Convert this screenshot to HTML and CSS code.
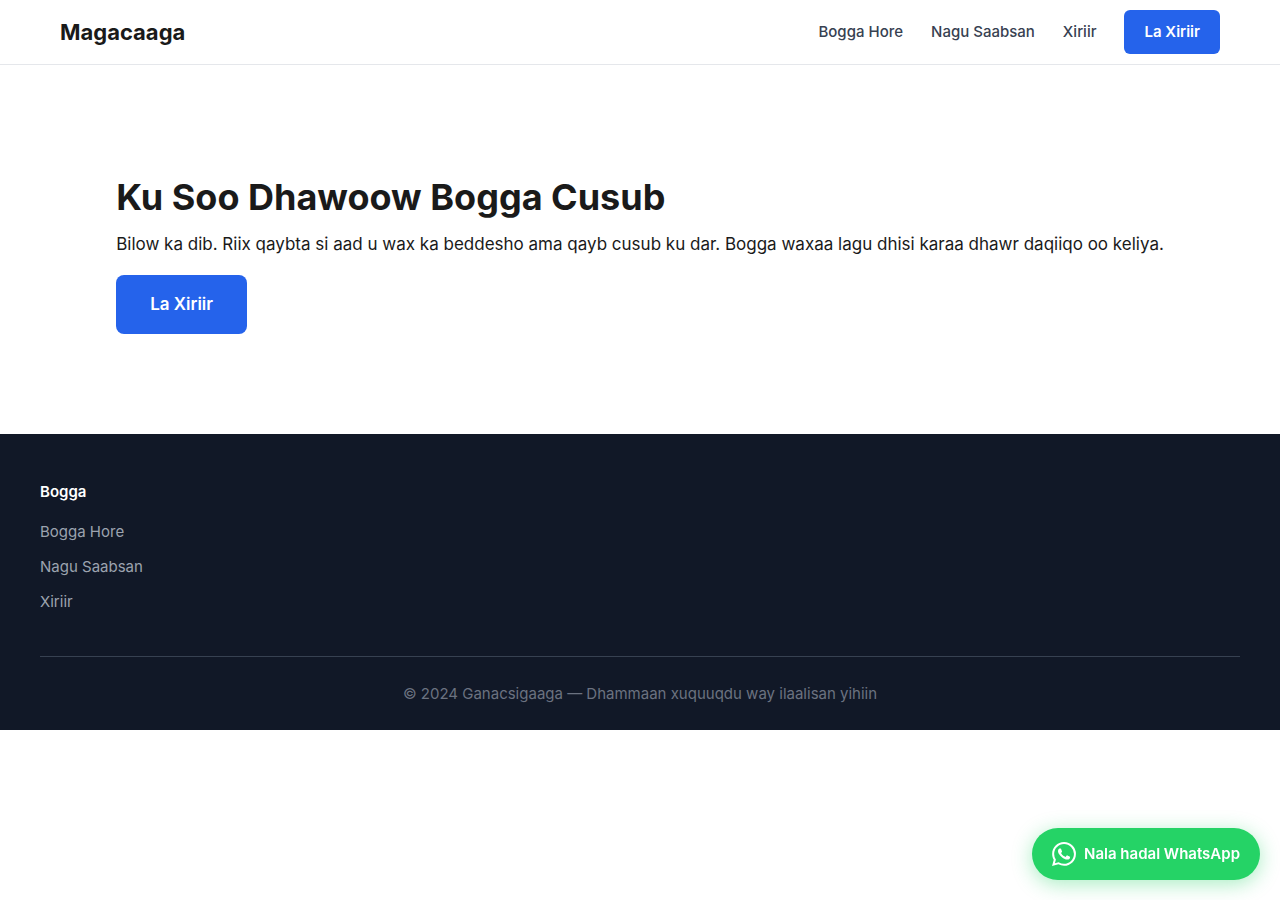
FILE: index.html
```
<!DOCTYPE html>
<html lang="so">
<head>
<meta charset="utf-8">
<meta name="viewport" content="width=device-width, initial-scale=1">
<title>Magacaaga</title>
<link rel="stylesheet" href="styles.css">
</head>
<body>
<header class="header">
  <div class="header-inner">
    <a class="logo" href="#">Magacaaga</a>
    <nav class="nav">
      <a class="nav-link" href="#">Bogga Hore</a>
      <a class="nav-link" href="#">Nagu Saabsan</a>
      <a class="nav-link" href="#">Xiriir</a>
      <a class="nav-cta" href="#">La Xiriir</a>
    </nav>
  </div>
</header>
<main class="hero">
  <div class="hero-content">
    <h1 class="hero-title">Ku Soo Dhawoow Bogga Cusub</h1>
    <p class="hero-text">Bilow ka dib. Riix qaybta si aad u wax ka beddesho ama qayb cusub ku dar. Bogga waxaa lagu dhisi karaa dhawr daqiiqo oo keliya.</p>
    <a class="hero-button" href="#">La Xiriir</a>
  </div>
</main>
<footer class="footer">
  <div class="footer-inner">
    <h2 class="footer-title">Bogga</h2>
    <ul class="footer-list">
      <li><a class="footer-link" href="#">Bogga Hore</a></li>
      <li><a class="footer-link" href="#">Nagu Saabsan</a></li>
      <li><a class="footer-link" href="#">Xiriir</a></li>
    </ul>
    <p class="copyright">© 2024 Ganacsigaaga — Dhammaan xuquuqdu way ilaalisan yihiin</p>
  </div>
</footer>
<a class="whatsapp" href="#">
  <svg class="whatsapp-icon" viewBox="0 0 24 24" fill="currentColor" aria-hidden="true"><path d="M17.472 14.382c-.297-.149-1.758-.867-2.03-.967-.273-.099-.471-.148-.67.15-.197.297-.767.966-.94 1.164-.173.199-.347.223-.644.075-.297-.15-1.255-.463-2.39-1.475-.883-.788-1.48-1.761-1.653-2.059-.173-.297-.018-.458.13-.606.134-.133.298-.347.446-.52.149-.174.198-.298.298-.497.099-.198.05-.371-.025-.52-.075-.149-.669-1.612-.916-2.207-.242-.579-.487-.5-.669-.51-.173-.008-.371-.01-.57-.01-.198 0-.52.074-.792.372-.272.297-1.04 1.016-1.04 2.479 0 1.462 1.065 2.875 1.213 3.074.149.198 2.096 3.2 5.077 4.487.709.306 1.262.489 1.694.625.712.227 1.36.195 1.871.118.571-.085 1.758-.719 2.006-1.413.248-.694.248-1.289.173-1.413-.074-.124-.272-.198-.57-.347m-5.421 7.403h-.004a9.87 9.87 0 01-5.031-1.378l-.361-.214-3.741.982.998-3.648-.235-.374a9.86 9.86 0 01-1.51-5.26c.001-5.45 4.436-9.884 9.888-9.884 2.64 0 5.122 1.03 6.988 2.898a9.825 9.825 0 012.893 6.994c-.003 5.45-4.437 9.884-9.885 9.884m8.413-18.297A11.815 11.815 0 0012.05 0C5.495 0 .16 5.335.157 11.892c0 2.096.547 4.142 1.588 5.945L.057 24l6.305-1.654a11.882 11.882 0 005.683 1.448h.005c6.554 0 11.89-5.335 11.893-11.893a11.821 11.821 0 00-3.48-8.413z"/></svg>
  <span>Nala hadal WhatsApp</span>
</a>
</body>
</html>
```
FILE: styles.css
```
* { box-sizing: border-box; margin: 0; padding: 0; }
body {
  font-family: Inter, "Liberation Sans", sans-serif;
  font-size: 17px;
  line-height: 29px;
  color: #1a1a1a;
  background: #fff;
}
a { color: inherit; text-decoration: none; }
.header { background: #fff; border-bottom: 1px solid #e5e7eb; }
.header-inner {
  max-width: 1200px;
  height: 64px;
  margin: 0 auto;
  padding: 0 20px;
  display: flex;
  align-items: center;
  justify-content: space-between;
}
.logo { font-size: 22px; line-height: 38px; font-weight: 700; }
.nav { display: flex; align-items: center; gap: 28px; font-size: 15px; line-height: 24px; }
.nav-link { font-weight: 500; color: #374151; }
.nav-cta { padding: 10px 20px; border-radius: 6px; background: #2563eb; color: #fff; font-weight: 600; }
.hero { display: flex; justify-content: center; padding: 100px 40px; }
.hero-title { font-size: 36px; line-height: 65px; font-weight: 700; }
.hero-text { margin-bottom: 16px; }
.hero-button {
  display: inline-block;
  padding: 15px 34px;
  border-radius: 8px;
  background: #2563eb;
  color: #fff;
  font-weight: 600;
}
.footer { background: #111827; padding: 45px 40px 24px; font-size: 15px; line-height: 25px; }
.footer-inner { max-width: 1200px; margin: 0 auto; }
.footer-title { margin-bottom: 15px; font-size: 15px; font-weight: 600; color: #fff; }
.footer-list { display: grid; gap: 10px; margin-bottom: 42px; list-style: none; }
.footer-link { color: #9ca3af; }
.copyright { padding-top: 24px; border-top: 1px solid #374151; text-align: center; color: #6b7280; }
.whatsapp {
  position: fixed;
  right: 20px;
  bottom: 20px;
  display: flex;
  align-items: center;
  gap: 8px;
  padding: 14px 20px;
  border-radius: 50px;
  background: #25d366;
  box-shadow: 0 4px 20px rgba(37, 211, 102, 0.4);
  color: #fff;
  font-size: 15px;
  line-height: 24px;
  font-weight: 600;
}
.whatsapp-icon { width: 24px; height: 24px; }
```
